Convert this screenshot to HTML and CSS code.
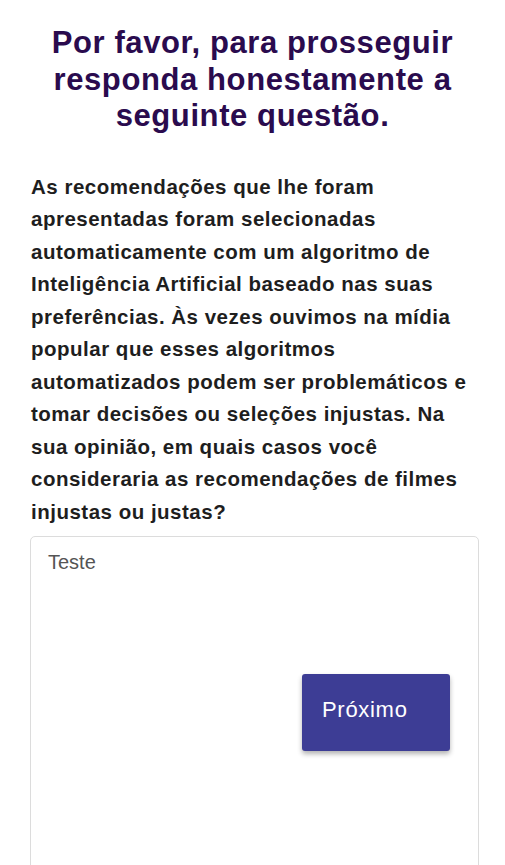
FILE: index.html
```html
<!DOCTYPE html>
<html lang="pt">
<head>
<meta charset="utf-8">
<title>Questão</title>
<link rel="stylesheet" href="styles.css">
</head>
<body>
<main class="page">
  <h1 class="title">Por favor, para prosseguir responda honestamente a seguinte questão.</h1>
  <p class="question">As recomendações que lhe foram apresentadas foram selecionadas automaticamente com um algoritmo de Inteligência Artificial baseado nas suas preferências. Às vezes ouvimos na mídia popular que esses algoritmos automatizados podem ser problemáticos e tomar decisões ou seleções injustas. Na sua opinião, em quais casos você consideraria as recomendações de filmes injustas ou justas?</p>
  <div class="answer">
    <textarea class="answer-box">Teste</textarea>
    <button class="next-btn" type="button">Próximo</button>
  </div>
</main>
</body>
</html>
```
FILE: styles.css
```css
html, body {
  margin: 0;
  padding: 0;
  background: #ffffff;
  overflow: hidden;
}
body {
  font-family: "Liberation Sans", Arial, sans-serif;
}
.page {
  display: flex;
  flex-direction: column;
  padding: 25px 0 0 0;
}
.title {
  margin: 0 auto;
  width: 440px;
  text-align: center;
  font-size: 31px;
  line-height: 36.5px;
  letter-spacing: 0.6px;
  font-weight: 700;
  color: #2a0b4e;
}
.question {
  margin: 36px 28px 0 31px;
  font-size: 20.5px;
  line-height: 32.5px;
  letter-spacing: 0.5px;
  font-weight: 700;
  color: #1e1e1e;
}
.answer {
  position: relative;
  margin: 8px 27px 0 30px;
}
.answer-box {
  display: block;
  box-sizing: border-box;
  width: 449px;
  height: 360px;
  margin: 0;
  padding: 12px 17px;
  border: 1px solid #dcdcdc;
  border-radius: 5px;
  font-family: "Liberation Sans", Arial, sans-serif;
  font-size: 20px;
  line-height: 26px;
  color: #555555;
  resize: none;
  outline: none;
  background: #ffffff;
}
.next-btn {
  position: absolute;
  left: 272px;
  top: 138px;
  width: 148px;
  height: 77px;
  box-sizing: border-box;
  padding: 0 0 6px 20px;
  text-align: left;
  border: none;
  border-radius: 3px;
  background: #3d3d95;
  color: #ffffff;
  font-family: "Liberation Sans", Arial, sans-serif;
  font-size: 22px;
  letter-spacing: 0.7px;
  box-shadow: 0 3px 5px rgba(0, 0, 0, 0.3);
}
```
